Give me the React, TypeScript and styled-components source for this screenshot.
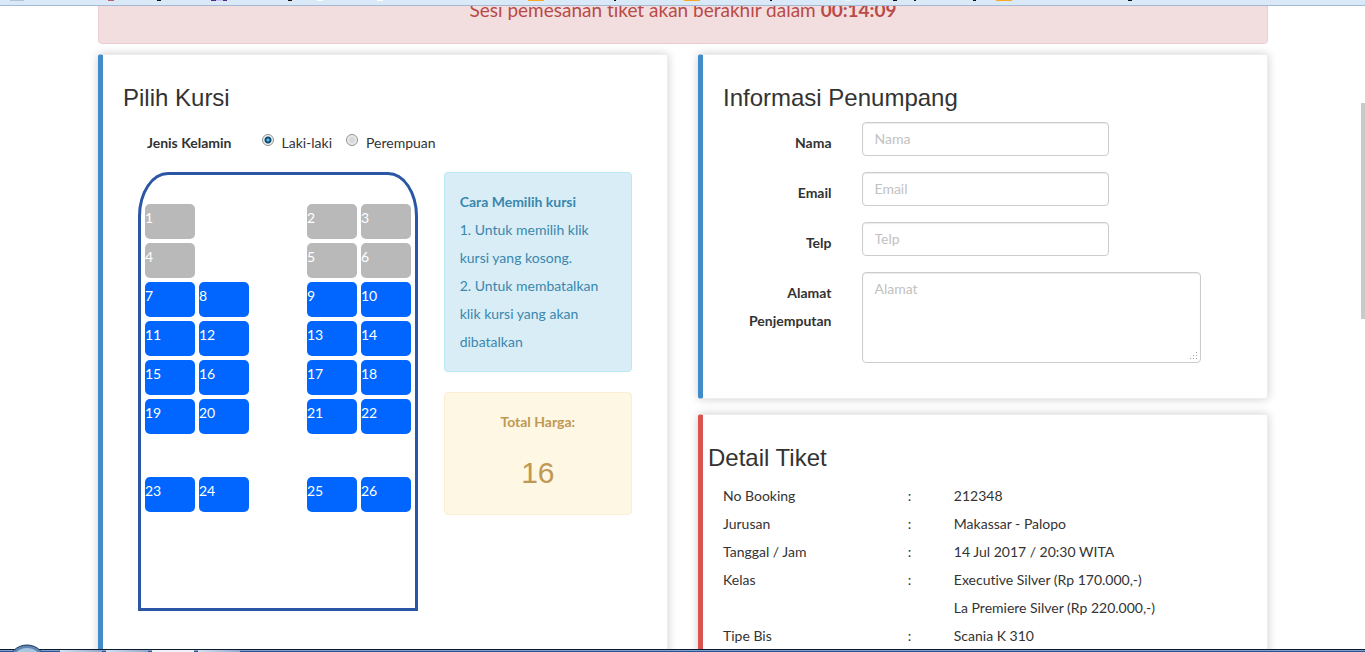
import React, { useState } from "react";
import styled, { createGlobalStyle } from "styled-components";

const GlobalStyle = createGlobalStyle`
  *, *::before, *::after { box-sizing: border-box; }
  body {
    margin: 0;
    background: #fff;
    color: #333;
    font-family: Lato, "Liberation Sans", sans-serif;
    font-size: 14px;
    font-variant-ligatures: none;
    line-height: 28px;
  }
`;

const Shell = styled.div`
  position: relative;
  display: flex;
  flex-direction: column;
  height: 100vh;
  overflow: hidden;
`;

const BookmarkBar = styled.header`
  flex: none;
  height: 6px;
  background: #d9e9f8;
  border-bottom: 1px solid #a6b8d2;
  overflow: hidden;
  svg { display: block; }
`;

const Viewport = styled.main`
  flex: 1;
  min-height: 0;
  padding-left: 1px;
  overflow: hidden;
`;

/* The page is shown scrolled down by a few lines. */
const Container = styled.div`
  max-width: 1170px;
  margin: -30px auto 0;
`;

const SessionAlert = styled.div`
  padding: 15px;
  margin-bottom: 10px;
  border: 1px solid #ebccd1;
  border-radius: 4px;
  background: #f2dede;
  color: #b94a48;
  font-size: 19px;
  line-height: 36px;
  text-align: center;
`;

const Columns = styled.div`
  display: grid;
  grid-template-columns: 1fr 1fr;
  gap: 30px;
`;

const Stack = styled.div`
  display: flex;
  flex-direction: column;
  gap: 15px;
`;

const Card = styled.section<{ $accent: string }>`
  padding: 30px 5px 20px;
  border: 1px solid #eee;
  border-left: 5px solid ${(p) => p.$accent};
  border-radius: 3px;
  background: #fff;
  box-shadow: 0 0 10px rgba(0, 0, 0, 0.2);
`;

const SeatCard = styled(Card)`
  min-height: 640px;
`;

const Title = styled.h3<{ $flush?: boolean }>`
  margin: 0 0 11px;
  padding: 0 ${(p) => (p.$flush ? 0 : 15)}px;
  font-family: "Liberation Sans", Arial, sans-serif;
  font-size: 24px;
  font-weight: 500;
  line-height: 26px;
`;

const FieldRow = styled.div`
  display: grid;
  grid-template-columns: repeat(12, 1fr);
  align-items: start;
  min-height: 35px;
  margin-bottom: 15px;
`;

const FieldLabel = styled.label`
  grid-column: span 3;
  padding: 7px 15px 0;
  font-weight: 700;
  text-align: right;
`;

const FieldCell = styled.div<{ $span: number }>`
  position: relative;
  grid-column: span ${(p) => p.$span};
  display: flex;
  padding: 0 15px;
`;

const RadioGroup = styled.div`
  grid-column: span 8;
  display: flex;
  gap: 14px;
  padding: 7px 15px 0;
`;

const RadioLabel = styled.label`
  display: flex;
  align-items: flex-start;
  gap: 8px;
`;

const Radio = styled.input`
  appearance: none;
  flex: none;
  width: 12px;
  height: 12px;
  margin: 5px 0 0;
  border: 1px solid #8e8f8f;
  border-radius: 50%;
  background: radial-gradient(circle, #d6d8dc 0 2px, #f2f2f2 5px);
  &:checked {
    background: radial-gradient(circle at 50% 50%, #5cc4ea 0 1px, #0d4a74 2px 3px, #f2f2f2 4px);
  }
`;

const controlStyle = `
  width: 100%;
  padding: 6px 12px;
  border: 1px solid #ccc;
  border-radius: 4px;
  background: #fff;
  color: #555;
  font: inherit;
  line-height: 20px;
  box-shadow: inset 0 1px 1px rgba(0, 0, 0, 0.08);
  &::placeholder { color: #c2c2c2; opacity: 1; }
`;

const TextInput = styled.input`
  ${controlStyle}
  height: 34px;
  padding: 5px 12px 7px;
`;

const TextArea = styled.textarea`
  ${controlStyle}
  display: block;
  height: 91px;
  resize: none;
`;

const Grip = styled.svg`
  position: absolute;
  right: 18px;
  bottom: 2px;
`;

const SeatLayout = styled.div`
  display: grid;
  grid-template-columns: 7fr 5fr;
  margin: 0 15px;
`;

const BusCell = styled.div`
  padding: 0 0 0 15px;
`;

const Bus = styled.div`
  width: 280px;
  min-height: 439px;
  padding: 29px 4px 0;
  border: 3px solid #2a56a5;
  border-radius: 30px 30px 0 0 / 44px 44px 0 0;
  display: grid;
  grid-template-columns: repeat(5, 50px);
  grid-auto-rows: 35px;
  gap: 4px;
  align-content: start;
`;

const Seat = styled.button<{ $col: number; $row: number }>`
  grid-column: ${(p) => p.$col};
  grid-row: ${(p) => p.$row};
  padding: 0 0 7px;
  border: 0;
  border-radius: 5px;
  background: #06f;
  color: #fff;
  font: inherit;
  line-height: 28px;
  text-align: left;
  cursor: pointer;
  &:disabled { background: #b9b9b9; cursor: default; }
  &[aria-pressed="true"] { background: #2a9d4a; }
`;

const SideCell = styled.div`
  display: flex;
  flex-direction: column;
  gap: 20px;
  padding: 0 15px;
`;

const InfoBox = styled.div`
  padding: 15px;
  border: 1px solid #bce8f1;
  border-radius: 4px;
  background: #d9edf7;
  color: #3a87ad;
`;

const Line = styled.p`
  margin: 0;
`;

const PriceBox = styled.div`
  padding: 15px;
  border: 1px solid #fbeed5;
  border-radius: 4px;
  background: #fdf7e3;
  color: #c09853;
  text-align: center;
`;

const Price = styled.output`
  display: block;
  margin: 20px 0 10px;
  font-family: "Liberation Sans", Arial, sans-serif;
  font-size: 30px;
  line-height: 33px;
`;

const DetailTable = styled.table`
  width: 100%;
  table-layout: fixed;
  border-collapse: collapse;
  th, td {
    padding: 0 15px;
    font-weight: 400;
    text-align: left;
    vertical-align: top;
  }
`;

const LabelCol = styled.col`
  width: 33.333%;
`;

const ColonCol = styled.col`
  width: 8.333%;
`;

const ScrollThumb = styled.div`
  position: absolute;
  top: 103px;
  right: 0;
  width: 4px;
  height: 216px;
  background: #cacaca;
`;

const Taskbar = styled.footer`
  flex: none;
  display: flex;
  gap: 4px;
  height: 3px;
  padding-left: 60px;
  border-top: 1px solid #0c1a30;
  background: linear-gradient(#7f9fcb 0 1px, #2c5594 1px);
`;

const Task = styled.span<{ $active?: boolean }>`
  width: 42px;
  background: ${(p) => (p.$active ? "#eef3f9" : "linear-gradient(90deg, #d6e0ee, #8fa9cd)")};
`;

const StartOrb = styled.svg`
  position: absolute;
  left: 8px;
  bottom: 0;
`;

type SeatSpec = [number: number, column: number, row: number];

const seats: SeatSpec[] = [
  [1, 1, 1], [2, 4, 1], [3, 5, 1],
  [4, 1, 2], [5, 4, 2], [6, 5, 2],
  [7, 1, 3], [8, 2, 3], [9, 4, 3], [10, 5, 3],
  [11, 1, 4], [12, 2, 4], [13, 4, 4], [14, 5, 4],
  [15, 1, 5], [16, 2, 5], [17, 4, 5], [18, 5, 5],
  [19, 1, 6], [20, 2, 6], [21, 4, 6], [22, 5, 6],
  [23, 1, 8], [24, 2, 8], [25, 4, 8], [26, 5, 8],
];

const lastTakenSeat = 6;

const details: [string, string[]][] = [
  ["No Booking", ["212348"]],
  ["Jurusan", ["Makassar - Palopo"]],
  ["Tanggal / Jam", ["14 Jul 2017 / 20:30 WITA"]],
  ["Kelas", ["Executive Silver (Rp 170.000,-)", "La Premiere Silver (Rp 220.000,-)"]],
  ["Tipe Bis", ["Scania K 310"]],
];

const fields = [
  { id: "nama", label: "Nama", type: "text" },
  { id: "email", label: "Email", type: "email" },
  { id: "telp", label: "Telp", type: "tel" },
];

/* Lower edges of the bookmark icons: x, width, height, colour. */
const bookmarkMarks: [number, number, number, string][] = [
  [10, 14, 1, "#b3c3d6"], [108, 6, 1, "#c0606c"], [157, 4, 1, "#1a1208"],
  [211, 16, 1, "#4b2a8c"], [216, 7, 1, "#c9c4ea"], [288, 4, 1, "#1a1208"],
  [317, 6, 1, "#fff"], [377, 6, 1, "#fff"], [528, 16, 1, "#f9a825"],
  [614, 2, 1, "#111"], [684, 16, 1, "#f9a825"], [770, 2, 1, "#111"],
  [845, 6, 1, "#eef4fb"], [893, 4, 1, "#111"], [914, 2, 1, "#111"],
  [973, 3, 1, "#111"], [996, 16, 1, "#f9a825"], [1128, 4, 1, "#111"],
];

export default function App() {
  const [gender, setGender] = useState("Laki-laki");
  const [picked, setPicked] = useState<number[]>([]);

  const toggleSeat = (n: number) =>
    setPicked((now) => (now.includes(n) ? now.filter((s) => s !== n) : [...now, n]));

  return (
    <Shell>
      <GlobalStyle />
      <BookmarkBar>
        <svg width="1365" height="5" aria-hidden="true">
          {bookmarkMarks.map(([x, w, h, fill]) => (
            <rect key={x} x={x} y="0" width={w} height={h} fill={fill} />
          ))}
        </svg>
      </BookmarkBar>

      <Viewport>
        <Container>
          <SessionAlert role="alert">
            Sesi pemesanan tiket akan berakhir dalam <strong>00:14:09</strong>
          </SessionAlert>

          <Columns>
            <SeatCard $accent="#428bca">
              <Title>Pilih Kursi</Title>
              <FieldRow role="radiogroup" aria-labelledby="gender-label">
                <FieldLabel as="span" id="gender-label">Jenis Kelamin</FieldLabel>
                <RadioGroup>
                  {["Laki-laki", "Perempuan"].map((option) => (
                    <RadioLabel key={option}>
                      <Radio
                        type="radio"
                        name="gender"
                        checked={gender === option}
                        onChange={() => setGender(option)}
                      />
                      {option}
                    </RadioLabel>
                  ))}
                </RadioGroup>
              </FieldRow>

              <SeatLayout>
                <BusCell>
                  <Bus>
                    {seats.map(([n, col, row]) => (
                      <Seat
                        key={n}
                        type="button"
                        $col={col}
                        $row={row}
                        disabled={n <= lastTakenSeat}
                        aria-pressed={picked.includes(n)}
                        onClick={() => toggleSeat(n)}
                      >
                        {n}
                      </Seat>
                    ))}
                  </Bus>
                </BusCell>
                <SideCell>
                  <InfoBox>
                    <strong>Cara Memilih kursi</strong>
                    <Line>1. Untuk memilih klik kursi yang kosong.</Line>
                    <Line>2. Untuk membatalkan klik kursi yang akan dibatalkan</Line>
                  </InfoBox>
                  <PriceBox>
                    <strong>Total Harga:</strong>
                    <Price>16</Price>
                  </PriceBox>
                </SideCell>
              </SeatLayout>
            </SeatCard>

            <Stack>
              <Card $accent="#428bca">
                <Title>Informasi Penumpang</Title>
                {fields.map((f) => (
                  <FieldRow key={f.id}>
                    <FieldLabel htmlFor={f.id}>{f.label}</FieldLabel>
                    <FieldCell $span={6}>
                      <TextInput id={f.id} type={f.type} placeholder={f.label} />
                    </FieldCell>
                  </FieldRow>
                ))}
                <FieldRow>
                  <FieldLabel htmlFor="alamat">Alamat Penjemputan</FieldLabel>
                  <FieldCell $span={8}>
                    <TextArea id="alamat" placeholder="Alamat" />
                    <Grip width="9" height="9" aria-hidden="true" fill="#a0a0a0">
                      <path d="M7 0h1v1h-1zM4 3h1v1h-1zM7 3h1v1h-1zM1 6h1v1h-1zM4 6h1v1h-1zM7 6h1v1h-1z" />
                    </Grip>
                  </FieldCell>
                </FieldRow>
              </Card>

              <Card $accent="#d9534f">
                <Title $flush>Detail Tiket</Title>
                <DetailTable>
                  <colgroup>
                    <LabelCol />
                    <ColonCol />
                    <col />
                  </colgroup>
                  <tbody>
                    {details.map(([label, lines]) => (
                      <tr key={label}>
                        <th scope="row">{label}</th>
                        <td>:</td>
                        <td>
                          {lines.map((line) => (
                            <Line key={line}>{line}</Line>
                          ))}
                        </td>
                      </tr>
                    ))}
                  </tbody>
                </DetailTable>
              </Card>
            </Stack>
          </Columns>
        </Container>
      </Viewport>

      <ScrollThumb />
      <Taskbar>
        <Task />
        <Task />
        <Task $active />
        <Task />
      </Taskbar>
      <StartOrb width="38" height="8" viewBox="0 0 38 8" aria-hidden="true">
        <circle cx="19" cy="20" r="19" fill="#5f86b0" stroke="#1d3a63" />
        <circle cx="19" cy="20" r="16" fill="#a9c6df" />
      </StartOrb>
    </Shell>
  );
}
